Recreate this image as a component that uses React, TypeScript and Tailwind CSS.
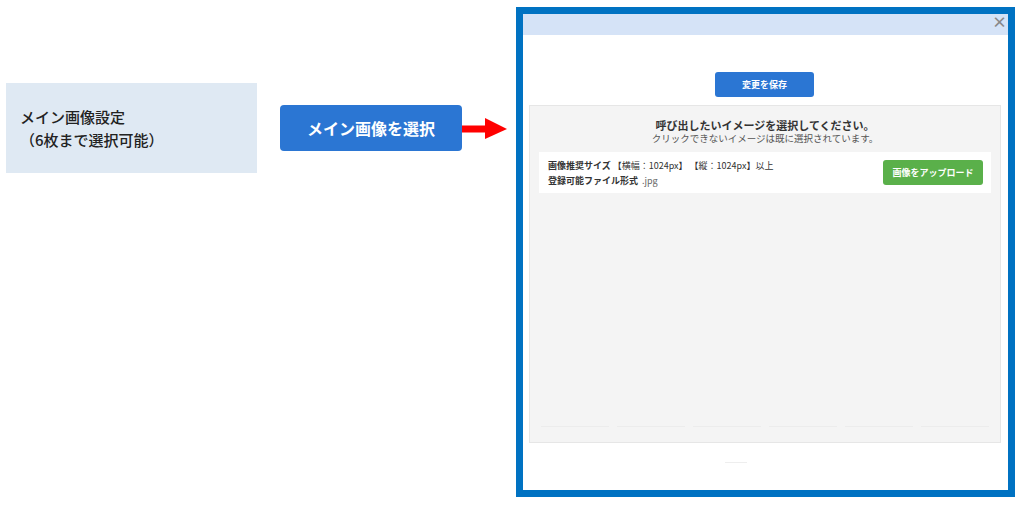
import React from 'react';

const font = { fontFamily: '"Noto Sans CJK JP", "Noto Sans", sans-serif' };

function Arrow() {
  return (
    <svg width="46" height="22" viewBox="0 0 46 22" className="mt-[118px]">
      <rect x="0" y="7.5" width="24" height="7" fill="#ff0000" />
      <polygon points="23,0 45,11 23,21" fill="#ff0000" />
    </svg>
  );
}

function Modal() {
  return (
    <div className="ml-[8px] mt-[7px] w-[499px] h-[490px] border-[7px] border-[#0072c2] bg-white flex flex-col">
      {/* header */}
      <div className="h-[21px] bg-[#d5e3f7] flex items-start justify-end pr-[1px]">
        <span className="text-[15px] leading-[15px] text-[#888] font-bold">×</span>
      </div>

      <div className="flex justify-center mt-[37px] pr-[2px]">
        <button className="w-[99px] h-[25px] rounded-[3px] bg-[#2b76d3] text-white text-[9px] font-bold leading-none">
          変更を保存
        </button>
      </div>

      {/* image list panel */}
      <div className="mt-[8px] ml-[6px] w-[472px] h-[338px] bg-[#f4f4f4] border border-[#e6e6e6] flex flex-col px-[9px]">
        <div className="pt-[12px] text-center">
          <p className="text-[11px] leading-[14px] font-bold text-[#333]">呼び出したいイメージを選択してください。</p>
          <p className="text-[9.5px] leading-[12px] text-[#555]">クリックできないイメージは既に選択されています。</p>
        </div>
        <div className="mt-[8px] h-[41px] bg-white flex items-center justify-between pl-[9px] pr-[8px]">
          <div className="text-[9px] leading-[15px] text-[#333]">
            <p>
              <span className="font-bold">画像推奨サイズ</span>
              <span className="ml-[2px]">【横幅：1024px】 【縦：1024px】以上</span>
            </p>
            <p>
              <span className="font-bold">登録可能ファイル形式</span>
              <span className="ml-[4px] text-[#666]">.jpg</span>
            </p>
          </div>
          <button className="w-[100px] h-[25px] rounded-[3px] bg-[#5ab04a] text-white text-[9px] font-bold leading-none">
            画像をアップロード
          </button>
        </div>
        <div className="flex-1" />
        <div className="mb-[15px] grid grid-cols-6 gap-[8px] px-[2px]">
          {[0, 1, 2, 3, 4, 5].map((i) => (
            <div key={i} className="h-px bg-[#ececec]" />
          ))}
        </div>
      </div>

      <div className="flex justify-center mt-[19px] pr-[60px]">
        <div className="w-[22px] h-px bg-[#eeeeee]" />
      </div>
    </div>
  );
}

export default function App() {
  return (
    <div className="w-[1024px] h-[508px] bg-white flex items-start" style={font}>
      <div className="ml-[6px] mt-[83px] w-[251px] h-[90px] bg-[#dfe9f3] flex flex-col justify-center pl-[14px] text-[15px] leading-[23px] text-[#222] font-medium">
        <p>メイン画像設定</p>
        <p>（6枚まで選択可能）</p>
      </div>
      <button className="ml-[23px] mt-[105px] w-[182px] h-[46px] rounded-[4px] bg-[#2b76d3] text-white text-[16px] font-bold">
        メイン画像を選択
      </button>
      <Arrow />
      <Modal />
    </div>
  );
}
